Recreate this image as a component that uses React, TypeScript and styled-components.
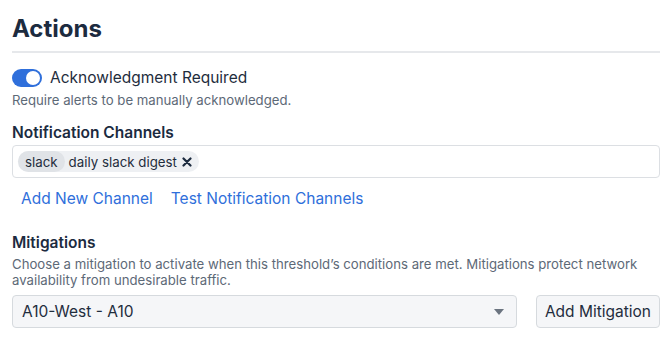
import React, { useState } from 'react';
import styled, { createGlobalStyle } from 'styled-components';

const Global = createGlobalStyle`
body {
  margin: 0;
  background: #ffffff;
  font-family: Inter, "Noto Sans", sans-serif;
  color: #1f2d3d;
}
`;

const Page = styled.div`
padding: 14px 12px 0 12px;
display: flex;
flex-direction: column;
`;

const Title = styled.h1`
margin: 0;
font-size: 24px;
line-height: 30px;
font-weight: 700;
color: #1c2b3f;
`;

const Divider = styled.div`
height: 2px;
background: #e6e8eb;
margin: 7px 0 0 0;
`;

const ToggleRow = styled.label`
display: flex;
align-items: center;
gap: 8px;
margin-top: 15px;
font-size: 15.5px;
line-height: 20px;
cursor: pointer;
`;

const Track = styled.span<{ $on: boolean }>`
width: 30px;
height: 18px;
border-radius: 9px;
background: ${p => (p.$on ? '#2f6fdb' : '#c5cad1')};
display: flex;
align-items: center;
justify-content: ${p => (p.$on ? 'flex-end' : 'flex-start')};
padding: 0 2px;
box-sizing: border-box;
`;

const Knob = styled.span`
width: 14px;
height: 14px;
border-radius: 50%;
background: #ffffff;
`;

const Help = styled.p<{ $top?: number }>`
margin: ${p => p.$top ?? 4}px 0 0 0;
font-size: 13.2px;
line-height: 16px;
color: #5d6977;
`;

const Label = styled.div<{ $top: number }>`
margin-top: ${p => p.$top}px;
font-size: 15.5px;
line-height: 20px;
font-weight: 600;
color: #1c2b3f;
`;

const TagInput = styled.div`
margin-top: 2px;
height: 33px;
box-sizing: border-box;
border: 1px solid #dcdfe3;
border-radius: 4px;
display: flex;
align-items: center;
padding: 0 5px;
`;

const Tag = styled.span`
display: flex;
align-items: center;
height: 21px;
border-radius: 11px;
background: #eef0f3;
font-size: 13.3px;
color: #1f2d3d;
padding-right: 7px;
`;

const TagKind = styled.span`
display: flex;
align-items: center;
height: 100%;
padding: 0 7px;
border-radius: 11px;
background: #e0e3e7;
margin-right: 4px;
`;

const Remove = styled.span`
display: flex;
margin-left: 5px;
`;

const Links = styled.div`
display: flex;
gap: 18px;
margin-top: 11px;
padding-left: 9px;
font-size: 15.5px;
line-height: 20px;
`;

const LinkText = styled.a`
color: #2f6fdb;
text-decoration: none;
cursor: pointer;
`;

const Row = styled.div`
display: flex;
gap: 19px;
margin-top: 7px;
`;

const Select = styled.div`
flex: 1;
height: 33px;
box-sizing: border-box;
border: 1px solid #d6dade;
border-radius: 4px;
background: #f5f6f8;
display: flex;
align-items: center;
justify-content: space-between;
padding: 0 12px 0 9px;
font-size: 15.5px;
`;

const Button = styled.button`
height: 33px;
box-sizing: border-box;
border: 1px solid #d6dade;
border-radius: 4px;
background: #f5f6f8;
padding: 0 8px;
font-family: inherit;
font-size: 15.5px;
color: #1f2d3d;
cursor: pointer;
`;

export default function App() {
  const [ack, setAck] = useState(true);
  return (
    <>
      <Global />
      <Page>
        <Title>Actions</Title>
        <Divider />
        <ToggleRow onClick={() => setAck(!ack)}>
          <Track $on={ack}>
            <Knob />
          </Track>
          Acknowledgment Required
        </ToggleRow>
        <Help>Require alerts to be manually acknowledged.</Help>

        <Label $top={15}>Notification Channels</Label>
        <TagInput>
          <Tag>
            <TagKind>slack</TagKind>
            daily slack digest
            <Remove>
              <svg width="10" height="10" viewBox="0 0 10 10">
                <path d="M1.5 1.5 L8.5 8.5 M8.5 1.5 L1.5 8.5" stroke="#1c2b3f" strokeWidth="2.2" strokeLinecap="round" />
              </svg>
            </Remove>
          </Tag>
        </TagInput>
        <Links>
          <LinkText>Add New Channel</LinkText>
          <LinkText>Test Notification Channels</LinkText>
        </Links>

        <Label $top={24}>Mitigations</Label>
        <Help $top={3}>
          Choose a mitigation to activate when this threshold’s conditions are met. Mitigations protect network
          availability from undesirable traffic.
        </Help>
        <Row>
          <Select>
            A10-West - A10
            <svg width="10" height="6" viewBox="0 0 10 6">
              <path d="M0 0 L10 0 L5 6 Z" fill="#6b7480" />
            </svg>
          </Select>
          <Button>Add Mitigation</Button>
        </Row>
      </Page>
    </>
  );
}
